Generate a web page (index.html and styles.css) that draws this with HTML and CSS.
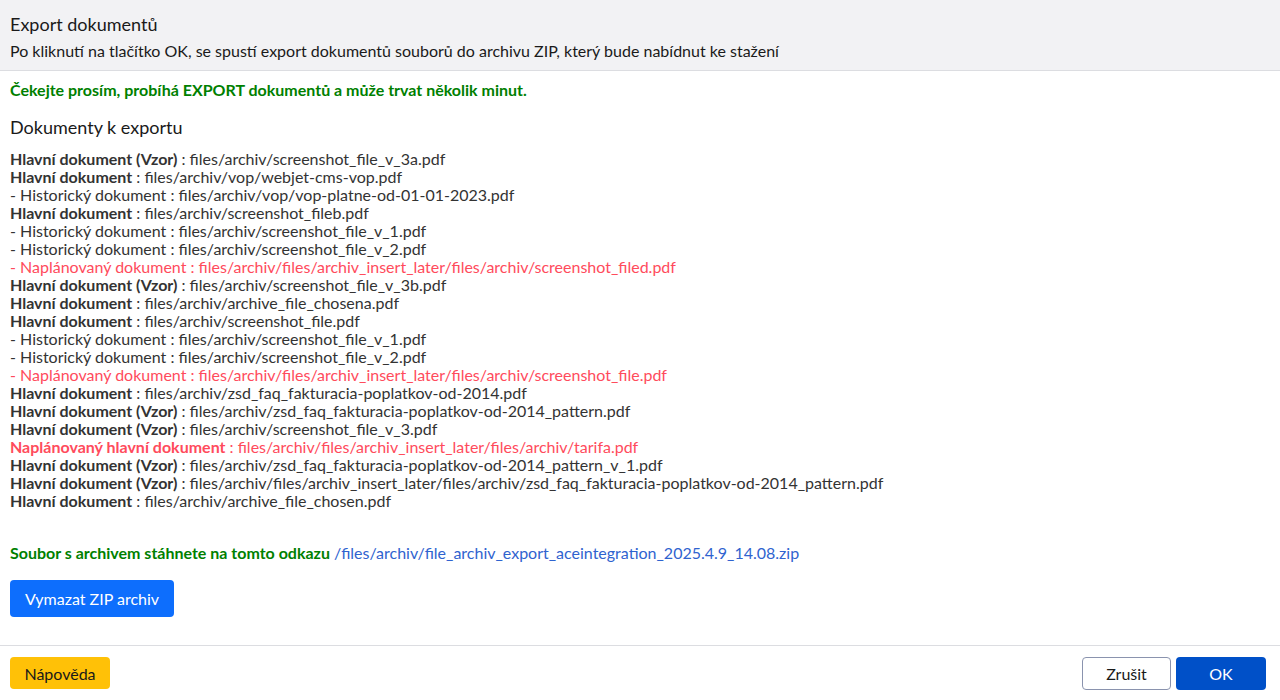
FILE: index.html
```html
<!DOCTYPE html>
<html lang="cs">
<head>
<meta charset="utf-8">
<title>Export dokumentů</title>
<link rel="stylesheet" href="styles.css">
</head>
<body>
<div class="dialog">
  <header class="dlg-header">
    <div class="dlg-title">Export dokumentů</div>
    <div class="dlg-sub">Po kliknutí na tlačítko OK, se spustí export dokumentů souborů do archivu ZIP, který bude nabídnut ke stažení</div>
  </header>
  <main class="dlg-body">
    <p class="wait">Čekejte prosím, probíhá EXPORT dokumentů a může trvat několik minut.</p>
    <h2 class="section">Dokumenty k exportu</h2>
    <div class="list">
      <div><b>Hlavní dokument (Vzor)</b> : files/archiv/screenshot_file_v_3a.pdf</div>
      <div><b>Hlavní dokument</b> : files/archiv/vop/webjet-cms-vop.pdf</div>
      <div>- Historický dokument : files/archiv/vop/vop-platne-od-01-01-2023.pdf</div>
      <div><b>Hlavní dokument</b> : files/archiv/screenshot_fileb.pdf</div>
      <div>- Historický dokument : files/archiv/screenshot_file_v_1.pdf</div>
      <div>- Historický dokument : files/archiv/screenshot_file_v_2.pdf</div>
      <div class="red">- Naplánovaný dokument : files/archiv/files/archiv_insert_later/files/archiv/screenshot_filed.pdf</div>
      <div><b>Hlavní dokument (Vzor)</b> : files/archiv/screenshot_file_v_3b.pdf</div>
      <div><b>Hlavní dokument</b> : files/archiv/archive_file_chosena.pdf</div>
      <div><b>Hlavní dokument</b> : files/archiv/screenshot_file.pdf</div>
      <div>- Historický dokument : files/archiv/screenshot_file_v_1.pdf</div>
      <div>- Historický dokument : files/archiv/screenshot_file_v_2.pdf</div>
      <div class="red">- Naplánovaný dokument : files/archiv/files/archiv_insert_later/files/archiv/screenshot_file.pdf</div>
      <div><b>Hlavní dokument</b> : files/archiv/zsd_faq_fakturacia-poplatkov-od-2014.pdf</div>
      <div><b>Hlavní dokument (Vzor)</b> : files/archiv/zsd_faq_fakturacia-poplatkov-od-2014_pattern.pdf</div>
      <div><b>Hlavní dokument (Vzor)</b> : files/archiv/screenshot_file_v_3.pdf</div>
      <div class="red"><b>Naplánovaný hlavní dokument</b> : files/archiv/files/archiv_insert_later/files/archiv/tarifa.pdf</div>
      <div><b>Hlavní dokument (Vzor)</b> : files/archiv/zsd_faq_fakturacia-poplatkov-od-2014_pattern_v_1.pdf</div>
      <div><b>Hlavní dokument (Vzor)</b> : files/archiv/files/archiv_insert_later/files/archiv/zsd_faq_fakturacia-poplatkov-od-2014_pattern.pdf</div>
      <div><b>Hlavní dokument</b> : files/archiv/archive_file_chosen.pdf</div>
    </div>
    <p class="download"><b>Soubor s archivem stáhnete na tomto odkazu</b> <a href="#">/files/archiv/file_archiv_export_aceintegration_2025.4.9_14.08.zip</a></p>
    <button class="btn btn-primary" type="button">Vymazat ZIP archiv</button>
  </main>
  <footer class="dlg-footer">
    <button class="btn btn-warning" type="button">Nápověda</button>
    <div class="footer-right">
      <button class="btn btn-outline" type="button">Zrušit</button>
      <button class="btn btn-ok" type="button">OK</button>
    </div>
  </footer>
</div>
</body>
</html>
```
FILE: styles.css
```css
* { box-sizing: border-box; }
html, body { margin: 0; padding: 0; background: #fff; }
body {
  font-family: Lato, "Noto Sans", sans-serif;
  font-size: 16px;
  color: #333;
  width: 1280px;
  height: 700px;
  overflow: hidden;
}
.dialog { display: flex; flex-direction: column; height: 700px; }
.dlg-header {
  background: #f2f2f4;
  border-bottom: 1px solid #dcdde1;
  padding: 12px 10px 0;
  height: 71px;
}
.dlg-title { font-size: 18px; line-height: 24px; color: #1a1a1a; }
.dlg-sub { font-size: 16px; line-height: 20px; margin-top: 5px; color: #1a1a1a; }
.dlg-body { padding: 0 10px; flex: 1; }
.wait { margin: 10px 0 0; font-weight: 700; color: #008000; line-height: 18px; font-size: 16px; }
.section { font-size: 18px; font-weight: 400; margin: 17px 0 0; line-height: 22px; color: #1a1a1a; }
.list { margin-top: 12px; line-height: 18px; }
.list b { font-weight: 700; }
.red { color: #ff4b5c; }
.download { margin: 33px 0 0; line-height: 20px; }
.download b { color: #008000; }
.download a { color: #2f63cf; text-decoration: none; }
.btn {
  font-family: inherit;
  font-size: 16px;
  border-radius: 4px;
  border: 1px solid transparent;
  cursor: pointer;
}
.btn-primary {
  margin-top: 17px;
  background: #0d6efd;
  color: #fff;
  height: 37px;
  width: 164px;
  padding: 0;
}
.dlg-footer {
  border-top: 1px solid #dcdde1;
  height: 55px;
  display: flex;
  justify-content: space-between;
  align-items: flex-start;
  padding: 11px 14px 0 10px;
}
.btn-warning {
  background: #ffc107;
  color: #1a1a1a;
  height: 32px;
  width: 100px;
  margin-top: 0;
}
.footer-right { display: flex; gap: 5px; }
.btn-outline {
  background: #fff;
  border-color: #8a93ae;
  color: #1a1a1a;
  height: 33px;
  width: 89px;
}
.btn-ok {
  background: #0050c8;
  color: #fff;
  height: 33px;
  width: 90px;
}
```
